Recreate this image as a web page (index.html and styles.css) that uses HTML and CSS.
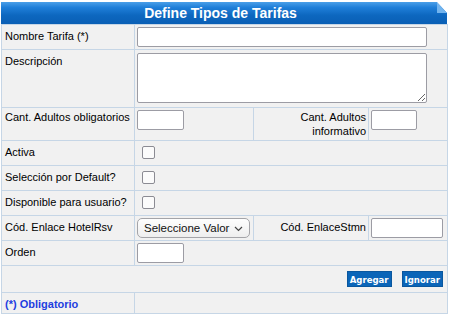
FILE: index.html
```html
<!DOCTYPE html>
<html lang="es">
<head>
  <meta charset="UTF-8">
  <meta name="viewport" content="width=device-width, initial-scale=1">
  <title>Define Tipos de Tarifas</title>
  <link rel="stylesheet" href="styles.css">
</head>
<body>
  <div class="panel">
    <div class="panel-title">Define Tipos de Tarifas</div>

    <table class="form-table">
      <colgroup>
        <col class="col-a">
        <col class="col-b">
        <col class="col-c">
        <col class="col-d">
      </colgroup>
      <tr>
        <td class="lbl">Nombre Tarifa (*)</td>
        <td class="val" colspan="3"><input type="text" class="txt txt-long"></td>
      </tr>
      <tr>
        <td class="lbl">Descripción</td>
        <td class="val" colspan="3"><textarea class="area"></textarea></td>
      </tr>
      <tr class="row-tight">
        <td class="lbl nowrap">Cant. Adultos obligatorios</td>
        <td class="val"><input type="text" class="txt txt-short"></td>
        <td class="lbl lbl-right">Cant. Adultos<br>informativo</td>
        <td class="val"><input type="text" class="txt txt-short2"></td>
      </tr>
      <tr>
        <td class="lbl">Activa</td>
        <td class="val" colspan="3"><input type="checkbox" class="chk"></td>
      </tr>
      <tr>
        <td class="lbl">Selección por Default?</td>
        <td class="val" colspan="3"><input type="checkbox" class="chk"></td>
      </tr>
      <tr>
        <td class="lbl">Disponible para usuario?</td>
        <td class="val" colspan="3"><input type="checkbox" class="chk"></td>
      </tr>
      <tr>
        <td class="lbl">Cód. Enlace HotelRsv</td>
        <td class="val">
          <div class="sel-wrap">
            <select class="sel">
              <option>Seleccione Valor</option>
            </select>
            <svg class="sel-arrow" width="9" height="6" viewBox="0 0 9 6">
              <polyline points="1,1 4.5,4.5 8,1" fill="none" stroke="#444" stroke-width="1.2"/>
            </svg>
          </div>
        </td>
        <td class="lbl lbl-right">Cód. EnlaceStmn</td>
        <td class="val"><input type="text" class="txt txt-mid"></td>
      </tr>
      <tr>
        <td class="lbl">Orden</td>
        <td class="val" colspan="3"><input type="text" class="txt txt-short"></td>
      </tr>
      <tr>
        <td class="val" colspan="4">
          <div class="actions">
            <button class="btn">Agregar</button>
            <button class="btn">Ignorar</button>
          </div>
        </td>
      </tr>
      <tr>
        <td class="lbl required">(*) Obligatorio</td>
        <td class="val" colspan="3"></td>
      </tr>
    </table>
  </div>
</body>
</html>
```

FILE: styles.css
```css
* {
  box-sizing: border-box;
}
body {
  margin: 0;
  background: #ffffff;
  color: #000000;
  font-family: "Liberation Sans", Arial, sans-serif;
  font-size: 11px;
}
.panel {
  width: 446px;
  margin: 2px 0 0 1px;
}

/* title bar with folded corner */
.panel-title {
  position: relative;
  height: 22px;
  line-height: 22px;
  padding-right: 7px;
  text-align: center;
  color: #ffffff;
  font-weight: bold;
  font-size: 14px;
  background: linear-gradient(#4a9fe8 0, #1f7fd9 25%, #0d67bf 60%, #0a5fb5 100%);
  clip-path: polygon(0 0, calc(100% - 10px) 0, 100% 11px, 100% 100%, 0 100%);
}
.panel-title::after {
  content: "";
  position: absolute;
  top: 0;
  right: 0;
  width: 10px;
  height: 11px;
  background: linear-gradient(to top right, #72b4ee 50%, transparent 50%);
}

/* form grid */
.form-table {
  width: 446px;
  table-layout: fixed;
  border-collapse: collapse;
}
.col-a { width: 133px; }
.col-b { width: 119px; }
.col-c { width: 115px; }
.col-d { width: 79px; }
.form-table td {
  padding: 2px;
  vertical-align: top;
  line-height: 14px;
  background: #f1f1f1;
  border: 1px solid #c6d6e6;
}
.form-table td.lbl {
  padding: 4px 2px 2px 3px;
}
.form-table .row-tight td.lbl {
  padding-top: 2px;
}
.lbl-right {
  text-align: right;
}
.nowrap {
  white-space: nowrap;
}
.required {
  color: #1e3ee0;
  font-weight: bold;
}

/* controls */
.txt {
  display: block;
  height: 20px;
  margin: 0;
  padding: 0 3px;
  background: #ffffff;
  border: 1px solid #9c9ca4;
  border-radius: 2px;
  font: 11px "Liberation Sans", Arial, sans-serif;
}
.txt-long { width: 290px; }
.txt-short { width: 47px; }
.txt-short2 { width: 46px; }
.txt-mid { width: 72px; }
.area {
  display: block;
  width: 290px;
  height: 50px;
  margin: 1px 0 2px;
  background: #ffffff;
  border: 1px solid #9c9ca4;
  border-radius: 2px;
  font: 11px "Liberation Sans", Arial, sans-serif;
}
.chk {
  appearance: none;
  display: block;
  width: 13px;
  height: 13px;
  margin: 3px 0 4px 5px;
  background: #fbfbfb;
  border: 1.5px solid #8b8b93;
  border-radius: 2px;
}
.sel-wrap {
  position: relative;
  width: 113px;
}
.sel {
  appearance: none;
  display: block;
  width: 113px;
  height: 20px;
  margin: 0;
  padding: 0 0 0 6px;
  color: #111111;
  background: linear-gradient(#fefefe, #eeeeee);
  border: 1px solid #a4a4a8;
  border-radius: 5px;
  font: 11.5px "Liberation Sans", Arial, sans-serif;
}
.sel-arrow {
  position: absolute;
  top: 8px;
  right: 7px;
}
.actions {
  display: flex;
  justify-content: flex-end;
  gap: 10px;
  padding-right: 2px;
}
.btn {
  height: 16px;
  margin: 3px 0;
  padding: 0 2px;
  color: #ffffff;
  background: #0b65b8;
  border: 1px solid #0a579e;
  font: bold 9.5px "DejaVu Sans Condensed", "DejaVu Sans", sans-serif;
  cursor: pointer;
}
```
